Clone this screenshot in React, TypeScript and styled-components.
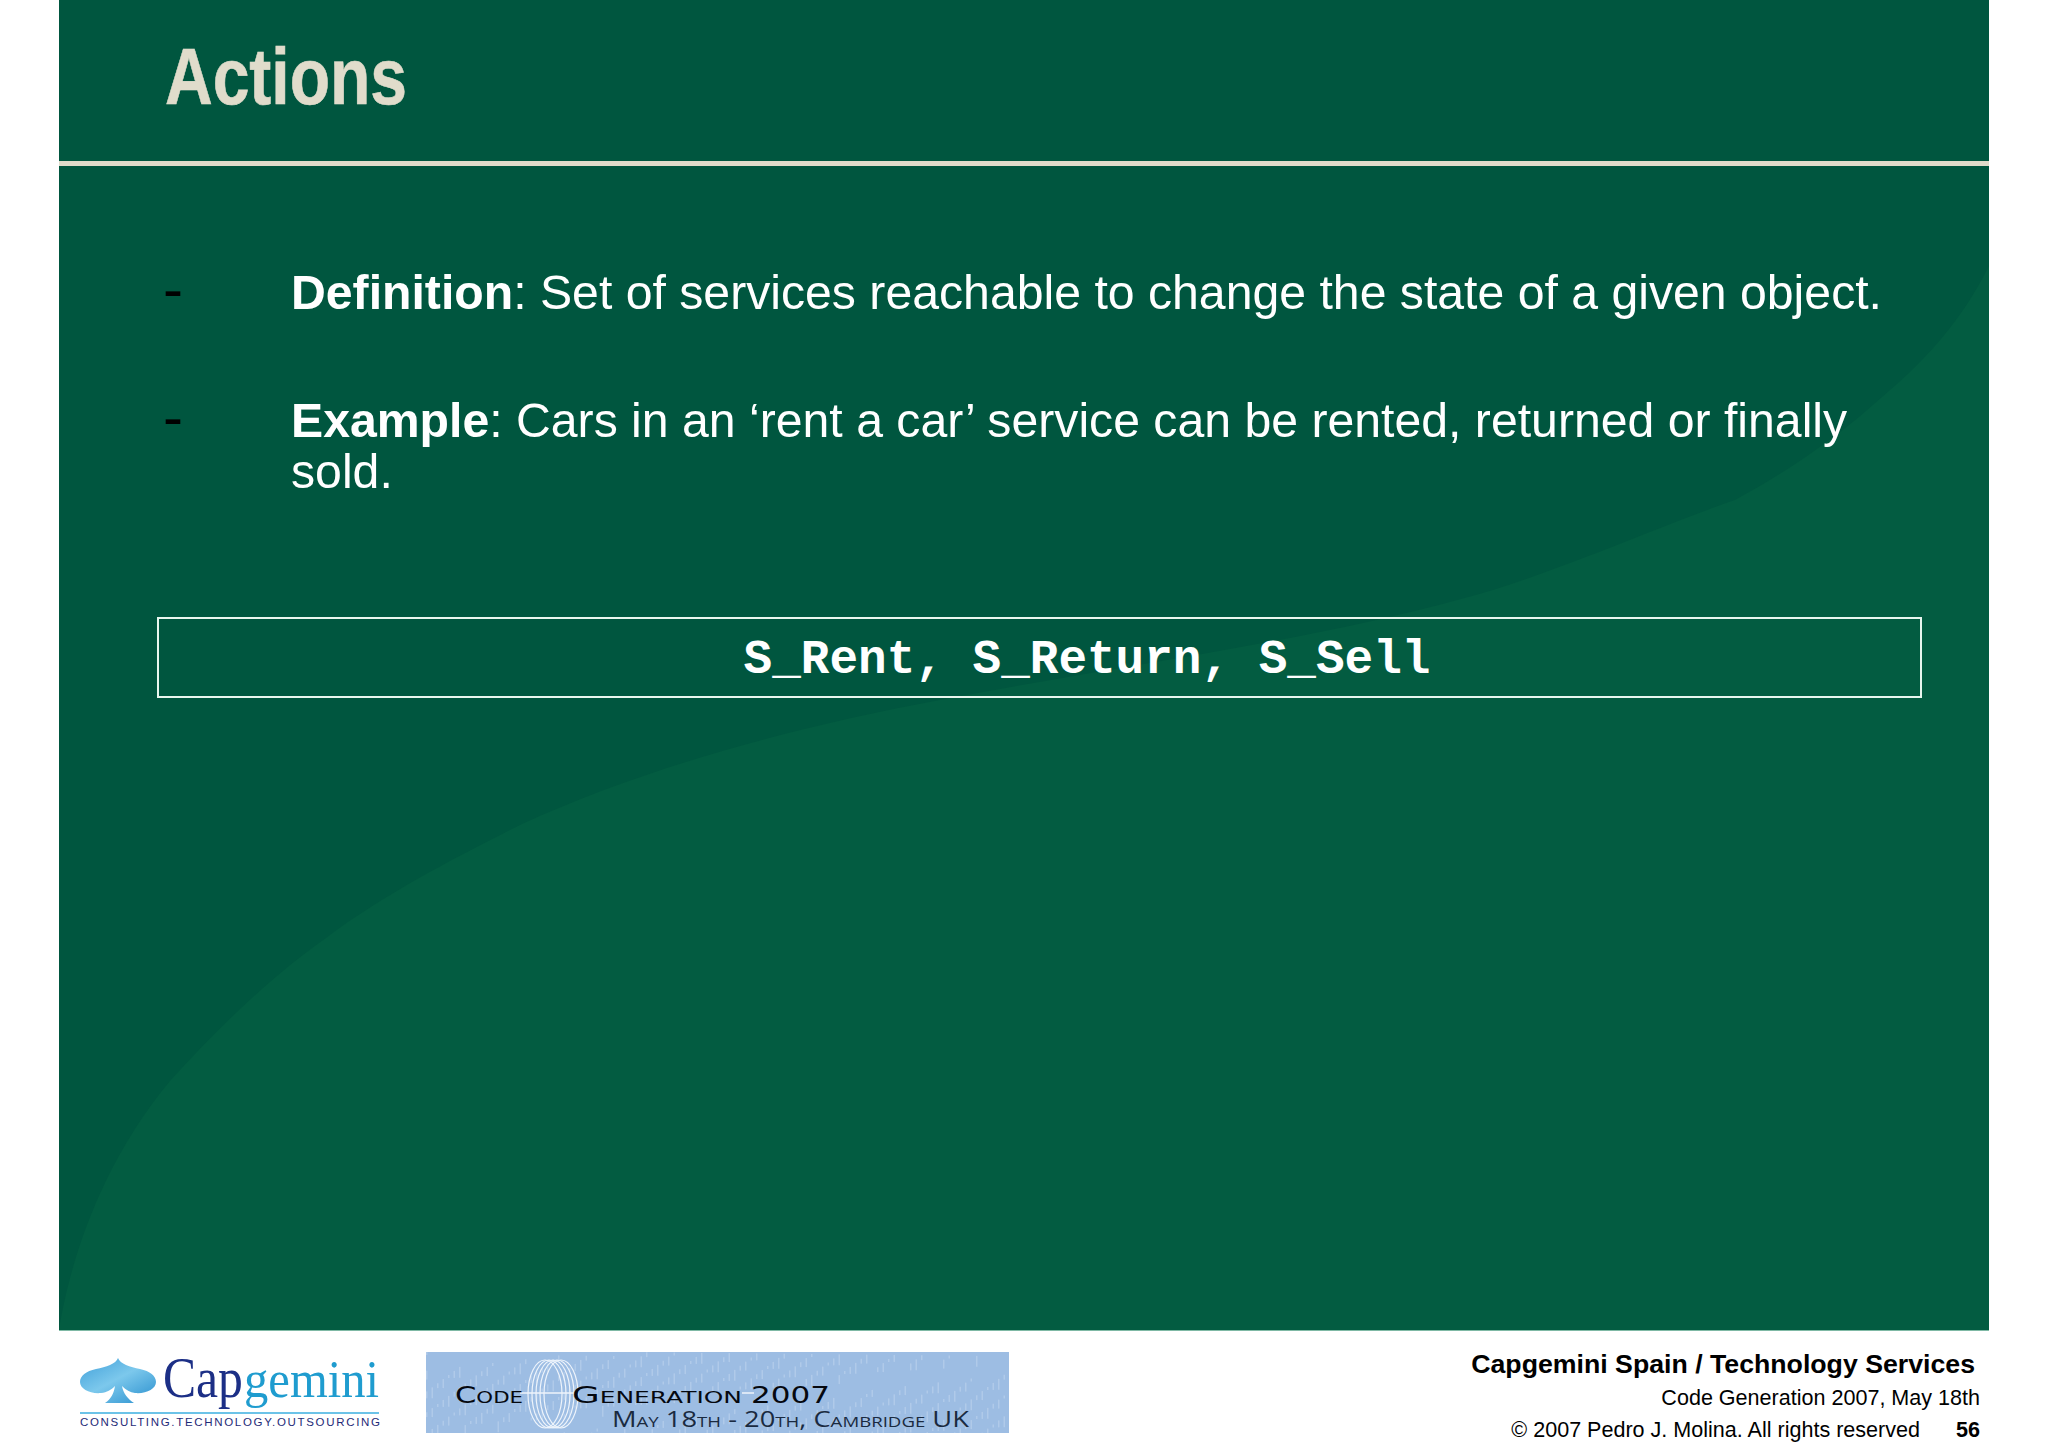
import React from 'react'
import styled, { createGlobalStyle } from 'styled-components'

const GlobalStyle = createGlobalStyle`
    html, body {
        margin: 0;
        padding: 0;
        background: #ffffff;
    }
`

const Page = styled.div`
    width: 2048px;
    height: 1447px;
    padding: 0 59px;
    box-sizing: border-box;
    display: flex;
    flex-direction: column;
    overflow: hidden;
    font-family: "Liberation Sans", Arial, sans-serif;
`

const Slide = styled.main`
    position: relative;
    height: 1331px;
    box-sizing: border-box;
    background: #00563f;
    border-bottom: 1px solid #7fb9a5;
    display: flex;
    flex-direction: column;
    flex: none;
`

const Swoosh = styled.svg`
    position: absolute;
    left: 0;
    top: 166px;
    width: 1930px;
    height: 1164px;
`

const Header = styled.header`
    position: relative;
    height: 166px;
    box-sizing: border-box;
    padding: 31px 0 0 106px;
    border-bottom: 5px solid #e0dccb;
`

const Title = styled.h1`
    margin: 0;
    font-size: 80px;
    line-height: 92px;
    font-weight: 700;
    color: #e0dccb;
    -webkit-text-stroke: 0.6px #e0dccb;
    transform: scaleX(0.825);
    transform-origin: left center;
`

const Body = styled.div`
    position: relative;
    padding: 101px 0 0 106px;
    display: flex;
    flex-direction: column;
`

const Item = styled.div`
    display: flex;
    width: 1790px;
    margin-bottom: 77px;
    font-size: 48.2px;
    line-height: 51px;
    color: #ffffff;
`

const Dash = styled.span`
    flex: none;
    width: 128px;
    margin-left: -2px;
    font-size: 60px;
    line-height: 44px;
    color: #000000;
`

const CodeBox = styled.div`
    margin: 43px 0 0 -8px;
    width: 1765px;
    height: 81px;
    box-sizing: border-box;
    border: 2px solid #e8f6ee;
    padding: 5px 0 0 95px;
    display: flex;
    align-items: center;
    justify-content: center;
    font-family: "Liberation Mono", "Courier New", monospace;
    font-size: 47.7px;
    font-weight: 700;
    color: #ffffff;
`

const Footer = styled.footer`
    flex: 1;
    display: flex;
    align-items: flex-start;
`

const LogoWrap = styled.svg`
    flex: none;
    width: 300px;
    height: 92px;
    margin: 12px 0 0 21px;
`

const BannerArt = styled.svg`
    flex: none;
    width: 583px;
    height: 81px;
    margin: 21px 0 0 46px;
    background: #9dbde3;
`

const BannerTitle = styled.text`
    font-family: "DejaVu Sans", sans-serif;
    font-size: 23px;
    font-variant: small-caps;
    fill: #05080f;
`

const BannerDate = styled.text`
    font-family: "Open Sans", sans-serif;
    font-size: 22px;
    font-variant: small-caps;
    fill: #1a2a40;
`

const Credits = styled.div`
    flex: 1;
    display: flex;
    flex-direction: column;
    align-items: flex-end;
    padding: 18px 9px 0 0;
    color: #000000;
`

const Company = styled.div`
    font-size: 26.7px;
    line-height: 30px;
    font-weight: 700;
    margin: 0 5px 3px 0;
`

const CreditLine = styled.div`
    font-size: 21.55px;
    line-height: 32px;
`

const Copyright = styled(CreditLine)`
    display: flex;
    gap: 36px;
`

const PageNumber = styled.b`
    font-weight: 700;
`

const specks = Array.from({ length: 320 }, (_, i) => ({
    x: (i * 137.5) % 583,
    y: (i * 61.7) % 81,
    h: 3 + (i % 5) * 2,
}))

const rings = [119, 123, 127, 131, 135]

const Logo = () => (
    <LogoWrap viewBox="0 -12 300 92">
        <defs>
            <linearGradient id="spade" x1="0" y1="0" x2="0.9" y2="1">
                <stop offset="0" stopColor="#3f9fd9" />
                <stop offset="0.5" stopColor="#7cc8ec" />
                <stop offset="1" stopColor="#2f93d0" />
            </linearGradient>
        </defs>
        <path
            d="M38 3 C40 9 50 12 60 14 C70 16 76 21 76 27 C76 34 66 39 55 38 C50 37.5 46 35 42 31 C43 38 48 44 54 48 L25 48 C31 44 34 38 35 31 C31 35 27 37.5 21 38 C10 39 0 34 0 27 C0 21 6 16 16 14 C26 12 36 9 38 3 Z"
            fill="url(#spade)"
        />
        <text transform="translate(83 42) scale(0.87 1)" fontFamily="Liberation Serif, serif" fontSize="57" fill="#1c2f86">Cap</text>
        <text transform="translate(164 42) scale(0.918 1)" fontFamily="Liberation Serif, serif" fontSize="53" fill="#1f9ccf">gemini</text>
        <rect x="0" y="57" width="299" height="2" fill="#6cc3e8" />
        <text x="0" y="71" fontFamily="Liberation Sans, sans-serif" fontSize="11.5" fill="#1f2b78" textLength="300">CONSULTING.TECHNOLOGY.OUTSOURCING</text>
    </LogoWrap>
)

const Banner = () => (
    <BannerArt viewBox="0 0 583 81">
        {specks.map((s, i) => (
            <rect key={i} x={s.x} y={s.y} width="1.5" height={s.h} fill="#c4d8ef" opacity="0.5" />
        ))}
        <g fill="none" stroke="#eef4fb" strokeWidth="1.2">
            {rings.map((cx) => (
                <ellipse key={cx} cx={cx} cy="42" rx="17" ry="34" />
            ))}
        </g>
        <path d="M94 41 H148 M316 41 H328" stroke="#eef4fb" strokeWidth="1.5" />
        <BannerTitle x="29" y="51" textLength="68" lengthAdjust="spacingAndGlyphs">Code</BannerTitle>
        <BannerTitle x="146" y="51" textLength="170" lengthAdjust="spacingAndGlyphs">Generation</BannerTitle>
        <BannerTitle x="325" y="51" textLength="79" lengthAdjust="spacingAndGlyphs">2007</BannerTitle>
        <BannerDate x="186" y="75" textLength="357" lengthAdjust="spacingAndGlyphs">May 18th - 20th, Cambridge UK</BannerDate>
    </BannerArt>
)

export default function App() {
    return (
        <Page>
            <GlobalStyle />
            <Slide>
                <Swoosh viewBox="0 0 1930 1164" preserveAspectRatio="none">
                    <path
                        d="M0 1164 C10 1100 40 1000 111 915 C170 850 220 805 267 772 C330 725 400 690 463 658 C590 600 740 560 881 534 C1060 500 1250 475 1402 433 C1490 410 1600 360 1676 334 C1730 305 1780 270 1823 231 C1860 200 1900 160 1930 100 V1164 Z"
                        fill="#035c41"
                    />
                </Swoosh>
                <Header>
                    <Title>Actions</Title>
                </Header>
                <Body>
                    <Item>
                        <Dash>-</Dash>
                        <span><b>Definition</b>: Set of services reachable to change the state of a given object.</span>
                    </Item>
                    <Item>
                        <Dash>-</Dash>
                        <span><b>Example</b>: Cars in an ‘rent a car’ service can be rented, returned or finally sold.</span>
                    </Item>
                    <CodeBox>S_Rent, S_Return, S_Sell</CodeBox>
                </Body>
            </Slide>
            <Footer>
                <Logo />
                <Banner />
                <Credits>
                    <Company>Capgemini Spain / Technology Services</Company>
                    <CreditLine>Code Generation 2007, May 18th</CreditLine>
                    <Copyright>
                        <span>© 2007 Pedro J. Molina. All rights reserved</span>
                        <PageNumber>56</PageNumber>
                    </Copyright>
                </Credits>
            </Footer>
        </Page>
    )
}
